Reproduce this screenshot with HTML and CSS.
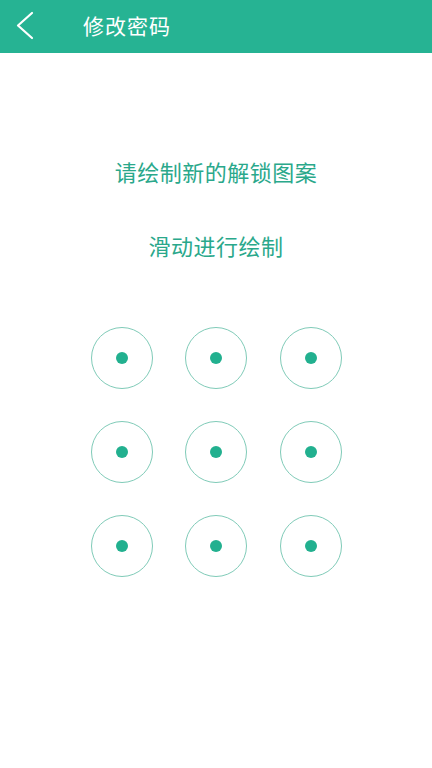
FILE: index.html
```html
<!DOCTYPE html>
<html lang="zh-CN">
<head>
<meta charset="utf-8">
<title>修改密码</title>
<link rel="stylesheet" href="styles.css">
</head>
<body>
<header class="topbar">
  <button class="back" aria-label="返回">
    <svg width="20" height="30" viewBox="0 0 20 30"><polyline points="16,2 2,14.5 16,27" fill="none" stroke="#fff" stroke-width="2.2" stroke-linecap="round" stroke-linejoin="round"/></svg>
  </button>
  <h1 class="title">修改密码</h1>
</header>
<main class="content">
  <p class="hint">请绘制新的解锁图案</p>
  <p class="sub">滑动进行绘制</p>
  <div class="grid">
    <div class="node"><span class="dot"></span></div>
    <div class="node"><span class="dot"></span></div>
    <div class="node"><span class="dot"></span></div>
    <div class="node"><span class="dot"></span></div>
    <div class="node"><span class="dot"></span></div>
    <div class="node"><span class="dot"></span></div>
    <div class="node"><span class="dot"></span></div>
    <div class="node"><span class="dot"></span></div>
    <div class="node"><span class="dot"></span></div>
  </div>
</main>
</body>
</html>
```
FILE: styles.css
```css
* { box-sizing: border-box; }
html, body { margin: 0; padding: 0; background: #fff; }
body {
  width: 432px;
  height: 768px;
  font-family: "Noto Sans CJK SC", "Noto Sans", sans-serif;
}
.topbar {
  height: 53px;
  background: #26b393;
  display: flex;
  align-items: center;
  padding-left: 16px;
}
.back {
  background: none;
  border: 0;
  padding: 0;
  width: 24px;
  height: 30px;
  display: flex;
  align-items: center;
  margin-right: 43px;
  margin-top: -2px;
}
.title {
  margin: 0;
  color: #fff;
  font-size: 21px;
  font-weight: 400;
  letter-spacing: 1px;
  margin-top: -4px;
}
.content {
  display: flex;
  flex-direction: column;
  align-items: center;
}
.hint, .sub {
  margin: 0;
  color: #2aa88b;
  font-size: 22px;
  font-weight: 400;
  line-height: 30px;
  letter-spacing: 0.5px;
}
.hint { margin-top: 103px; }
.sub { margin-top: 44px; }
.grid {
  margin-top: 67px;
  display: grid;
  grid-template-columns: repeat(3, 62px);
  grid-auto-rows: 62px;
  column-gap: 32.5px;
  row-gap: 32px;
}
.node {
  border: 1px solid #80cbb8;
  border-radius: 50%;
  display: flex;
  align-items: center;
  justify-content: center;
}
.dot {
  width: 12px;
  height: 12px;
  border-radius: 50%;
  background: #22b08f;
}
```
